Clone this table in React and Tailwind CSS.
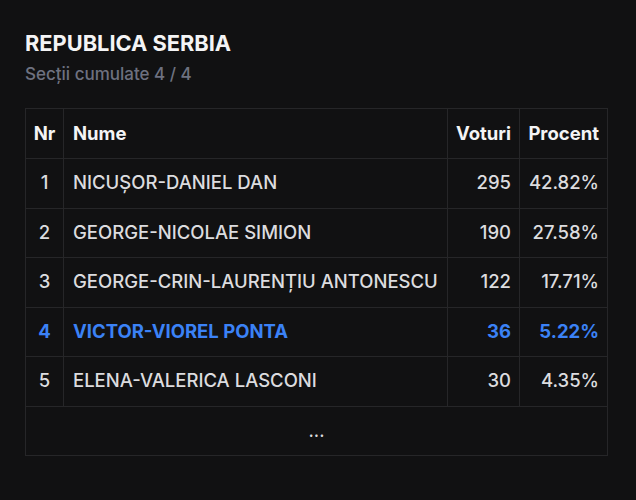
import React from 'react';

const rows = [
  { nr: 1, name: 'NICUȘOR-DANIEL DAN', votes: 295, pct: '42.82%' },
  { nr: 2, name: 'GEORGE-NICOLAE SIMION', votes: 190, pct: '27.58%' },
  { nr: 3, name: 'GEORGE-CRIN-LAURENȚIU ANTONESCU', votes: 122, pct: '17.71%' },
  { nr: 4, name: 'VICTOR-VIOREL PONTA', votes: 36, pct: '5.22%', highlight: true },
  { nr: 5, name: 'ELENA-VALERICA LASCONI', votes: 30, pct: '4.35%' },
];

export default function App() {
  return (
    <div className="min-h-[500px] w-[636px] bg-[#111112] px-[25px] pt-[29px] font-['Inter',sans-serif] text-[#e4e4e7]">
      <h1 className="text-[21.8px] font-bold leading-[28px] text-[#f4f4f5]">REPUBLICA SERBIA</h1>
      <p className="mt-[6px] text-[17px] font-medium leading-[22px] text-[#6e7180]">Secții cumulate 4 / 4</p>

      <table className="mt-[23px] w-[583px] table-fixed border-collapse text-[18.5px]">
        <colgroup>
          <col className="w-[38px]" />
          <col />
          <col className="w-[72px]" />
          <col className="w-[88px]" />
        </colgroup>
        <thead>
          <tr className="h-[50px]">
            <th className="border border-[#262628] px-[4px] text-center font-bold text-[#f4f4f5]">Nr</th>
            <th className="border border-[#262628] px-[9px] text-left font-bold text-[#f4f4f5]">Nume</th>
            <th className="border border-[#262628] px-[8px] text-right font-bold text-[#f4f4f5]">Voturi</th>
            <th className="border border-[#262628] px-[8px] text-right font-bold text-[#f4f4f5]">Procent</th>
          </tr>
        </thead>
        <tbody>
          {rows.map((r) => {
            const c = r.highlight ? 'font-bold text-[#3b82f6]' : 'font-medium text-[#dcdcdf]';
            return (
              <tr key={r.nr} className="h-[49.5px]">
                <td className={`border border-[#262628] text-center ${c}`}>{r.nr}</td>
                <td className={`whitespace-nowrap border border-[#262628] px-[9px] text-left ${c}`}>{r.name}</td>
                <td className={`border border-[#262628] px-[8px] text-right ${c}`}>{r.votes}</td>
                <td className={`border border-[#262628] px-[8px] text-right ${c}`}>{r.pct}</td>
              </tr>
            );
          })}
          <tr className="h-[49.5px]">
            <td colSpan={4} className="border border-[#262628] text-center text-[#dcdcdf]">...</td>
          </tr>
        </tbody>
      </table>
    </div>
  );
}
